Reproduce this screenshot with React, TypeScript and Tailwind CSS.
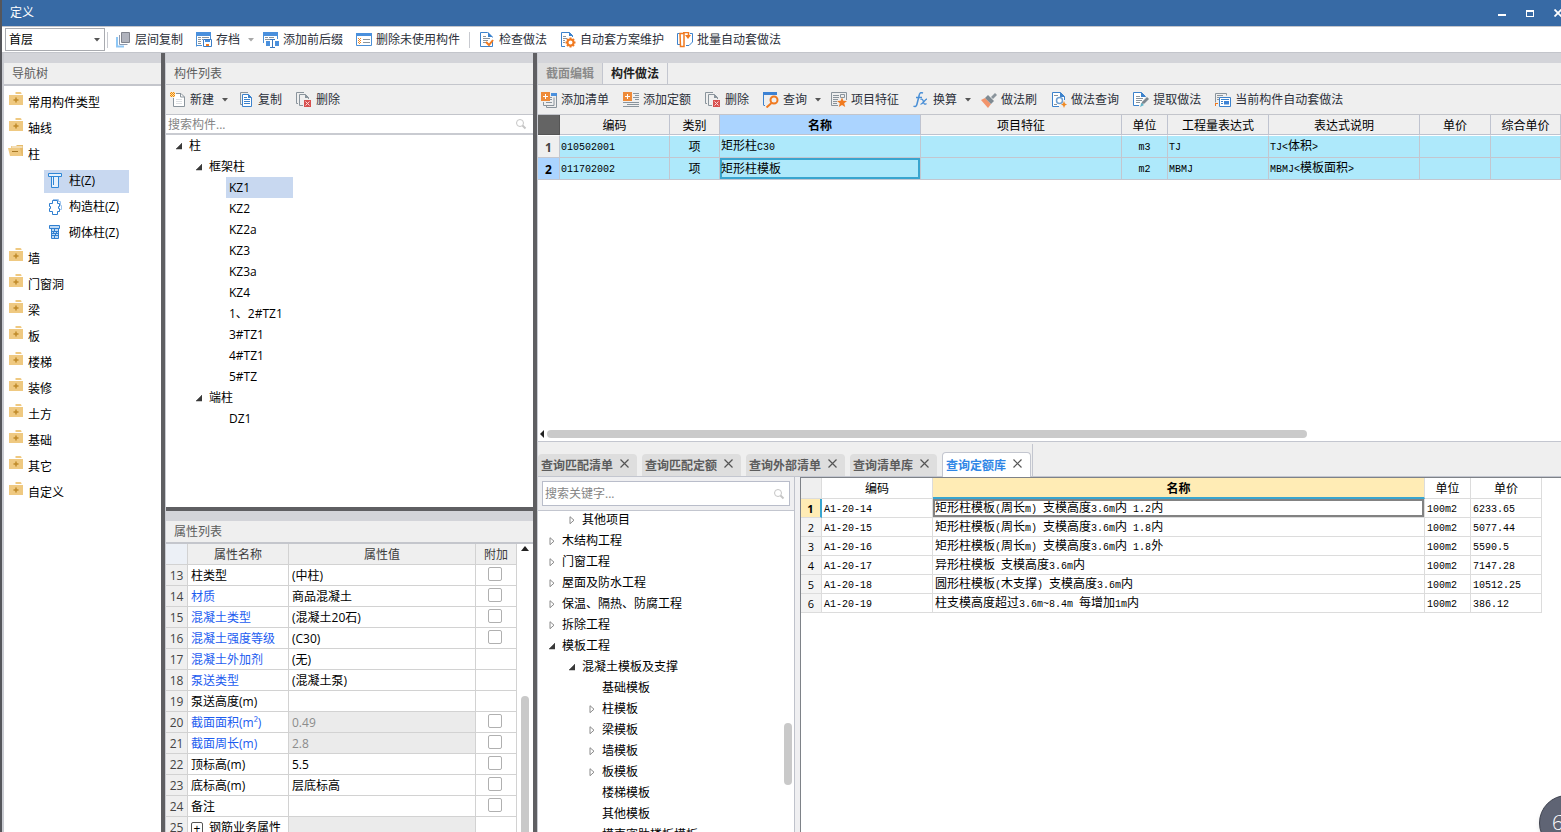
import type { ReactNode } from "react";

type IconProps = { children: ReactNode };

function Svg({ children }: IconProps) {
  return (
    <svg width="16" height="16" viewBox="0 0 16 16" fill="none" className="shrink-0" aria-hidden="true">
      {children}
    </svg>
  );
}

//Toolbar icons
const icons = {
  floorCopy: (
    <Svg>
      <path d="M6.500.5h8v10h-8z" fill="#b0b3bd" stroke="#80838c" />
      <path d="M4.500 3v9.500h8" stroke="#8f9bb0" />
      <path d="M2 5v9.500h7" stroke="#8fc7f5" strokeWidth="2" />
    </Svg>
  ),
  archive: (
    <Svg>
      <path d="M.5 14.500V.5h14v7" stroke="#4a8fd6" />
      <path d="M0 0h15v4H0z" fill="#4a90dd" />
      <path d="M.5 13.500H6" stroke="#4a8fd6" />
      <path d="M2 5.500h3M6 5.500h7M2 7.500h3M6 7.500h1M2 9.500h3M2 11.500h3" stroke="#8a949c" />
      <path d="M7.500 7.500h8v7h-8z" fill="#fff" stroke="#3c7cc4" />
      <path d="M9 8h5v2H9z" fill="#4a90dd" />
      <path d="M10 12h3v2h-3z" fill="#f07a20" />
    </Svg>
  ),
  affix: (
    <Svg>
      <path d="M.5 11V.5h14V7" stroke="#4a8fd6" />
      <path d="M0 0h15v4H0z" fill="#4a90dd" />
      <path d="M2 5.500h3M6 5.500h5M2 7.500h6" stroke="#8a949c" />
      <path d="M3 9h4v5H3zM12 9h4v5h-4z" fill="#4a90dd" />
      <path d="M7 7.500h5M9.500 7v8M7 15.500h5" stroke="#3a78c0" />
    </Svg>
  ),
  removeUnused: (
    <Svg>
      <path d="M.5 1.500h15v12H.5z" fill="#fff" stroke="#4a8fd6" />
      <path d="M0 1h16v3H0z" fill="#4a90dd" />
      <path d="M7 7.500h7M7 10.500h7" stroke="#8a949c" />
      <path d="M2 6h1v1H2zM4 6h1v1H4zM3 7h1v1H3zM2 8h1v1H2zM4 8h1v1H4zM3 9h1v1H3zM2 10h1v1H2zM4 10h1v1H4zM3 11h1v1H3z" fill="#f08a24" />
    </Svg>
  ),
  check: (
    <Svg>
      <path d="M13.500 8v6.500h-12V.5h7l5 5" stroke="#3c82cc" />
      <path d="M9 0v5h5z" fill="#3c82cc" />
      <path d="M4 4.500h3M4 6.500h7M4 8.500h5M4 10.500h3" stroke="#8a949c" />
      <path d="M7 10l3 3 4-5" stroke="#f07a20" strokeWidth="2" />
    </Svg>
  ),
  scheme: (
    <Svg>
      <path d="M5 14.500H1.500V.5h8l3 3V5" stroke="#3c82cc" />
      <path d="M9 0v4h4z" fill="#3c82cc" />
      <path d="M3 4.500h3M3 6.500h4M3 8.500h2M3 10.500h2" stroke="#8a949c" />
      <circle cx="10.500" cy="10.500" r="3" stroke="#f07a20" strokeWidth="2" />
      <path d="M10.500 5.500v2M10.500 13.500v2M5.500 10.500h2M13.500 10.500h2M7 7l1 1M13 13l1 1M14 7l-1 1M8 13l-1 1" stroke="#f07a20" strokeWidth="2" />
    </Svg>
  ),
  batch: (
    <Svg>
      <path d="M3 12.500H.5v-11H4M9 13.500h3l3.500-3.500V1.500H13" stroke="#3c82cc" />
      <path d="M3 1.500h4v13H3.500z" stroke="#f07a20" strokeWidth="1.500" />
      <path d="M6 .5h5.500v3" stroke="#f07a20" strokeWidth="1.500" />
      <path d="M8 3h6l-3 4z" fill="#f07a20" />
    </Svg>
  ),
  create: (
    <Svg>
      <path d="M6 1.500h5l3.500 3.500v9.500h-11V6" fill="#fff" stroke="#8a949c" />
      <path d="M10.500 1.500V5h4" stroke="#8a949c" />
      <path d="M6 7.500h6M6 9.500h6M6 11.500h6" stroke="#dde0e3" />
      <path d="M0 0h5v5H0z" fill="#fbdcae" />
      <path d="M1 0h1v1H1zM3 0h1v1H3zM0 1h1v1H0zM2 1h1v1H2zM4 1h1v1H4zM1 2h1v1H1zM3 2h1v1H3zM0 3h1v1H0zM2 3h1v1H2zM4 3h1v1H4zM1 4h1v1H1zM3 4h1v1H3z" fill="#f08a00" />
    </Svg>
  ),
  copy: (
    <Svg>
      <path d="M4 12.500H2.500v-12H10" stroke="#8a949c" />
      <path d="M4.500 2.500h6l3 3v9h-9z" fill="#fff" stroke="#3c82cc" />
      <path d="M10 2v4h4z" fill="#3c82cc" />
      <path d="M6 5.500h3M6 7.500h6M6 9.500h6M6 11.500h6" stroke="#3c82cc" />
    </Svg>
  ),
  remove: (
    <Svg>
      <path d="M2 11.500H.5V.5H8" stroke="#8a949c" />
      <path d="M7 13.500H3.500v-11h6l3 3V7" stroke="#8a949c" />
      <path d="M9 2v4h4z" fill="#8a949c" />
      <path d="M8 8h7v7H8z" fill="#d8504f" />
      <path d="M9.500 9.500l4 4M13.500 9.500l-4 4" stroke="#fbdada" />
    </Svg>
  ),
  addList: (
    <Svg>
      <path d="M10 1h6v3h-6z" fill="#4a90dd" />
      <path d="M15.500 4v11.500h-10V14M2.500 10v3.500h10.500v-8" stroke="#8a949c" />
      <path d="M9 5.500h2M9 7.500h2M5 10.500h6" stroke="#8a949c" />
      <path d="M0 0h9v9H0z" fill="#ee8b3a" />
      <path d="M4.500 2v5M2 4.500h5" stroke="#fff" />
    </Svg>
  ),
  addQuota: (
    <Svg>
      <path d="M10 1.500h6M12 3.500h4M10 5.500h6M12 7.500h4M0 10.500h16M4 12.500h12M0 14.500h16" stroke="#8a949c" />
      <path d="M0 0h9v9H0z" fill="#ee8b3a" />
      <path d="M4.500 2v5M2 4.500h5" stroke="#fff" />
    </Svg>
  ),
  query: (
    <Svg>
      <path d="M.5 13V1M2 13.500H.5" stroke="#3c82cc" />
      <path d="M0 0h14v3H0z" fill="#3c82d4" />
      <circle cx="11" cy="8" r="3.500" stroke="#f07a20" strokeWidth="2" />
      <path d="M8.500 11l-5 4.500" stroke="#f07a20" strokeWidth="2" />
    </Svg>
  ),
  feature: (
    <Svg>
      <path d="M7 13.500H.5V.5h15V8" stroke="#8a949c" />
      <path d="M2 3.500h6M2 5.500h6M2 7.500h5M2 9.500h4M2 11.500h4" stroke="#8a949c" />
      <path d="M9.500 2.500h4v3h-4z" stroke="#8a949c" />
      <path d="M11 5.500l1.300 3.200 3.700.2-2.800 2.300 1 3.800-3.200-2-3.200 2 1-3.800L6 8.900l3.700-.2z" fill="#f07a20" />
    </Svg>
  ),
  convert: (
    <Svg>
      <path d="M10 1C7.500 0 6.500 1 6 4L4 12c-.5 2.500-2 3-3.500 2M3 5.500h6" stroke="#4a8fd6" strokeWidth="1.500" />
      <path d="M7.500 7.500c2-1 2.500.5 3 2.500s1 3 3 1.500M14 7c-2 0-4.500 6-6.500 5" stroke="#4a8fd6" strokeWidth="1.300" />
    </Svg>
  ),
  brush: (
    <Svg>
      <path d="M0 8l4-2 6 6-3 4z" fill="#f2946b" />
      <path d="M4 6l3-3 6 6-3 3z" fill="#7f8a92" />
      <path d="M10 5l4-4 2 2-4 4z" fill="#8a949c" />
    </Svg>
  ),
  methodQuery: (
    <Svg>
      <path d="M8 14.500H1.500V.5h8l4 4V8" fill="#fff" stroke="#3c82cc" />
      <path d="M9 0v5h5z" fill="#3c82cc" />
      <circle cx="8.500" cy="8.500" r="3" stroke="#6f9fd0" strokeWidth="1.500" />
      <path d="M3 3.500h4M3 12.500h3" stroke="#8a949c" />
      <path d="M13 9l1 2.500 2 1-2 1-1 2.500-1-2.500-2-1 2-1z" fill="#f08a24" />
    </Svg>
  ),
  extract: (
    <Svg>
      <path d="M6 13.500H.5V.5h8l4 4" fill="#fff" stroke="#3c82cc" />
      <path d="M8 0v5h5z" fill="#3c82cc" />
      <path d="M3 4.500h4M3 6.500h7M3 8.500h6M3 10.500h4" stroke="#8a949c" />
      <path d="M8 12l1.500-2.500L14 5l2 2-4.500 4.500z" fill="#7c8790" />
      <path d="M7 15l1.500-4 2.500 2z" fill="#5bb3c8" />
    </Svg>
  ),
  autoApply: (
    <Svg>
      <path d="M.5 10.500v-9h11v2M2 3.500h6M2 5.500h2M2 7.500h2" stroke="#8a949c" />
      <path d="M0 11h3v1H1v2H0z" fill="#f07a20" />
      <path d="M4.500 5.500h11v9h-11z" fill="#fff" stroke="#3c82cc" />
      <path d="M6 7.500h8M6 9.500h2M6 11.500h2" stroke="#3c82cc" />
      <path d="M9 9h5v3.500H9z" fill="#3c82d4" />
    </Svg>
  ),
};

type IconName = keyof typeof icons;

function Caret({ light = false }: { light?: boolean }) {
  return (
    <svg width="6" height="4" viewBox="0 0 6 4" className="ml-1 -mr-1 shrink-0" aria-hidden="true">
      <path d="M0 0h6L3 3.500z" fill={light ? "#a8a8a8" : "#555"} />
    </svg>
  );
}

function ToolButton({ icon, label, caret }: { icon: IconName; label: string; caret?: "dark" | "light" }) {
  return (
    <button type="button" className="flex shrink-0 items-center gap-1 whitespace-nowrap leading-4 text-[#2b2f3a]">
      {icons[icon]}
      <span>{label}</span>
      {caret && <Caret light={caret === "light"} />}
    </button>
  );
}

function PanelTitle({ title }: { title: string }) {
  return (
    <>
      <div className="h-[10px] shrink-0 bg-[#d3d4d9]" />
      <h2 className="flex h-[22px] shrink-0 items-center border-b border-[#c4c6cc] bg-[#efefef] px-2 text-[#5c5c5c]">{title}</h2>
    </>
  );
}

function SearchIcon() {
  return (
    <svg width="12" height="12" viewBox="0 0 12 12" fill="none" className="shrink-0" aria-hidden="true">
      <circle cx="5" cy="5" r="3.500" stroke="#c6c6c6" />
      <path d="M7.500 7.500l3 3" stroke="#c6c6c6" strokeWidth="2" />
    </svg>
  );
}

//Navigation tree
const navTop = ["常用构件类型", "轴线"];
const navBottom = ["墙", "门窗洞", "梁", "板", "楼梯", "装修", "土方", "基础", "其它", "自定义"];

function Folder({ open = false }: { open?: boolean }) {
  return (
    <svg width="16" height="14" viewBox="0 0 16 14" className="mb-2 shrink-0" aria-hidden="true">
      {open ? (
        <>
          <path d="M3 2h5l1-1h6v11H3z" fill="#e6bb6a" />
          <path d="M3.500 3h11" stroke="#fff" />
          <path d="M0 4h12l2 8H2z" fill="#efc981" />
          <path d="M4 7.500h6" stroke="#a87a26" />
        </>
      ) : (
        <>
          <path d="M7.500 0h5l1 1v1h-6z" fill="#efc981" />
          <path d="M1 3h14v10H1z" fill="#efc981" />
          <path d="M8 5.500v5M5.500 8h5" stroke="#c08a2a" strokeWidth="1.500" />
        </>
      )}
    </svg>
  );
}

function NavRow({ label, open }: { label: string; open?: boolean }) {
  return (
    <li className="flex h-[26px] items-center gap-1 pl-1">
      <Folder open={open} />
      <button type="button">{label}</button>
    </li>
  );
}

const navChildren = [
  {
    label: "柱(Z)",
    active: true,
    icon: (
      <Svg>
        <path d="M1.500.5h13v3h-13zM4.500 3.500h7v11h-7zM6.500 4v8" stroke="#2f86d6" fill="#e6f1fc" />
      </Svg>
    ),
  },
  {
    label: "构造柱(Z)",
    active: false,
    icon: (
      <Svg>
        <path d="M6 .5h5.500v2h2v4h1v4h-2v2" stroke="#9cc3ec" />
        <path d="M5.500 1.500h5v3h2v3h-1v2h1v3h-2v3h-5v-3h-3v-3h1v-2h-1v-3h3z" stroke="#2f7fd0" fill="#fff" />
      </Svg>
    ),
  },
  {
    label: "砌体柱(Z)",
    active: false,
    icon: (
      <Svg>
        <path d="M2.500.5h10v3h-10zM4.500 3.500h7v10h-7z" stroke="#2f7fd0" fill="#bfdaf5" />
        <path d="M4 6.500h7M4 8.500h7M4 10.500h7M7.500 4v2M6.500 7v2M9.500 7v2M8.500 9v2M7.500 11v2" stroke="#2f7fd0" />
      </Svg>
    ),
  },
];

//Indented trees
type Node = { label: string; depth: number; state?: "open" | "closed"; selected?: boolean };

const components: Node[] = [
  { label: "柱", depth: 0, state: "open" },
  { label: "框架柱", depth: 1, state: "open" },
  { label: "KZ1", depth: 2, selected: true },
  { label: "KZ2", depth: 2 },
  { label: "KZ2a", depth: 2 },
  { label: "KZ3", depth: 2 },
  { label: "KZ3a", depth: 2 },
  { label: "KZ4", depth: 2 },
  { label: "1、2#TZ1", depth: 2 },
  { label: "3#TZ1", depth: 2 },
  { label: "4#TZ1", depth: 2 },
  { label: "5#TZ", depth: 2 },
  { label: "端柱", depth: 1, state: "open" },
  { label: "DZ1", depth: 2 },
];

const quotaTree: Node[] = [
  { label: "其他项目", depth: 1, state: "closed" },
  { label: "木结构工程", depth: 0, state: "closed" },
  { label: "门窗工程", depth: 0, state: "closed" },
  { label: "屋面及防水工程", depth: 0, state: "closed" },
  { label: "保温、隔热、防腐工程", depth: 0, state: "closed" },
  { label: "拆除工程", depth: 0, state: "closed" },
  { label: "模板工程", depth: 0, state: "open" },
  { label: "混凝土模板及支撑", depth: 1, state: "open" },
  { label: "基础模板", depth: 2 },
  { label: "柱模板", depth: 2, state: "closed" },
  { label: "梁模板", depth: 2, state: "closed" },
  { label: "墙模板", depth: 2, state: "closed" },
  { label: "板模板", depth: 2, state: "closed" },
  { label: "楼梯模板", depth: 2 },
  { label: "其他模板", depth: 2 },
  { label: "模壳密肋楼板模板", depth: 2 },
];

const indent = ["pl-[10px]", "pl-[30px]", "pl-[50px]"];

function Tree({ nodes }: { nodes: Node[] }) {
  return (
    <ul>
      {nodes.map(node => (
        <li key={node.label} className={`flex h-[21px] items-center gap-1 ${indent[node.depth]}`}>
          <svg width="6" height="8" viewBox="0 0 6 8" className="shrink-0" aria-hidden="true">
            {node.state === "open" && <path d="M6 1v6H0z" fill="#3a3a3a" stroke="#3a3a3a" strokeWidth=".5" />}
            {node.state === "closed" && <path d="M1 .7l4 3.500-4 3.500z" fill="#fff" stroke="#8a8a8a" />}
          </svg>
          <button
            type="button"
            className={`h-[21px] whitespace-nowrap px-[3px] text-left ${node.selected ? "w-[67px] bg-[#c8d8f0]" : ""}`}
          >
            {node.label}
          </button>
        </li>
      ))}
    </ul>
  );
}

//Property grid
const properties = [
  { no: 13, name: "柱类型", value: "(中柱)", extra: true },
  { no: 14, name: "材质", value: "商品混凝土", extra: true, blue: true },
  { no: 15, name: "混凝土类型", value: "(混凝土20石)", extra: true, blue: true },
  { no: 16, name: "混凝土强度等级", value: "(C30)", extra: true, blue: true },
  { no: 17, name: "混凝土外加剂", value: "(无)", blue: true },
  { no: 18, name: "泵送类型", value: "(混凝土泵)", blue: true },
  { no: 19, name: "泵送高度(m)", value: "" },
  { no: 20, name: "截面面积(m²)", value: "0.49", extra: true, blue: true, locked: true },
  { no: 21, name: "截面周长(m)", value: "2.8", extra: true, blue: true, locked: true },
  { no: 22, name: "顶标高(m)", value: "5.5", extra: true },
  { no: 23, name: "底标高(m)", value: "层底标高", extra: true },
  { no: 24, name: "备注", value: "", extra: true },
  { no: 25, name: "钢筋业务属性", value: "", locked: true, group: true },
];

function PropertyTable() {
  return (
    <table className="w-full table-fixed border-separate border-spacing-0">
      <colgroup>
        <col className="w-[22px]" />
        <col className="w-[101px]" />
        <col />
        <col className="w-[41px]" />
      </colgroup>
      <thead>
        <tr className="h-[21px] bg-[#efefef] text-[#3c3c3c]">
          <th className="border-r border-b border-[#d2d2d2] bg-[#ecf0f6]" />
          <th className="border-r border-b border-[#d2d2d2] pt-0.5 font-normal">属性名称</th>
          <th className="border-r border-b border-[#d2d2d2] pt-0.5 font-normal">属性值</th>
          <th className="border-r border-b border-[#d2d2d2] pt-0.5 font-normal">附加</th>
        </tr>
      </thead>
      <tbody>
        {properties.map(row => (
          <tr key={row.no} className="h-[21px]">
            <td className="border-r border-b border-[#d2d2d2] bg-[#efefef] pt-0.5 text-center text-[#444]">{row.no}</td>
            <td className={`border-r border-b border-[#d2d2d2] pt-0.5 pl-[3px] whitespace-nowrap ${row.blue ? "text-[#1c5cf0]" : ""}`}>
              {row.group ? (
                <span className="flex items-center gap-1.5">
                  <button type="button" aria-label="展开" className="h-3 w-3 rounded-[2px] border border-[#555] text-xs leading-[9px]">
                    +
                  </button>
                  {row.name}
                </span>
              ) : (
                row.name
              )}
            </td>
            <td className={`border-r border-b border-[#d2d2d2] pt-0.5 pl-[3px] ${row.locked ? "bg-[#ebebeb] text-[#8c8c8c]" : ""}`}>{row.value}</td>
            <td className="border-r border-b border-[#d2d2d2] pr-0.5">
              {row.extra && (
                <input
                  type="checkbox"
                  aria-label={`附加 ${row.name}`}
                  className="mx-auto mb-0.5 block h-[14px] w-[14px] appearance-none rounded-[2px] border border-[#b0b0b0] bg-white"
                />
              )}
            </td>
          </tr>
        ))}
      </tbody>
    </table>
  );
}

//Grid text keeps latin characters at half the width of a Chinese one
function GridText({ text }: { text: string }) {
  return (
    <>
      {text.split(/([\x20-\x7e]+)/).map((part, i) =>
        i % 2 ? (
          <span key={i} className="text-[10px] whitespace-pre">
            {part}
          </span>
        ) : (
          part
        )
      )}
    </>
  );
}

const methodHeads = ["编码", "类别", "名称", "项目特征", "单位", "工程量表达式", "表达式说明", "单价", "综合单价"];
const methodRows = [
  ["010502001", "项", "矩形柱C30", "", "m3", "TJ", "TJ<体积>", "", ""],
  ["011702002", "项", "矩形柱模板", "", "m2", "MBMJ", "MBMJ<模板面积>", "", ""],
];

function MethodTable() {
  return (
    <table className="w-full table-fixed border-separate border-spacing-0">
      <colgroup>
        <col className="w-[22px]" />
        <col className="w-[110px]" />
        <col className="w-[50px]" />
        <col className="w-[201px]" />
        <col className="w-[201px]" />
        <col className="w-[46px]" />
        <col className="w-[101px]" />
        <col className="w-[151px]" />
        <col className="w-[71px]" />
        <col />
      </colgroup>
      <thead>
        <tr className="h-5 bg-[#efefef]">
          <th className="border-r border-b border-[#555] bg-[#646464]" />
          {methodHeads.map(head => (
            <th
              key={head}
              className={`border-r border-b border-[#bfc3cf] pt-0.5 ${head === "名称" ? "bg-[#abd4ff] font-bold" : "font-normal"}`}
            >
              {head}
            </th>
          ))}
        </tr>
      </thead>
      <tbody className="font-['Liberation_Mono','Noto_Sans_CJK_SC',monospace]">
        {methodRows.map((row, r) => (
          <tr key={row[0]} className={r === 0 ? "h-[23px]" : "h-[22px]"}>
            <th
              className={`border-r border-b border-[#c3c6cf] pt-0.5 font-['Open_Sans',sans-serif] font-bold ${r === 0 ? "border-t border-t-white bg-[#efefef] text-[#444]" : "bg-[#abd4ff]"}`}
            >
              {r + 1}
            </th>
            {row.map((cell, c) => (
              <td
                key={c}
                className={`border-r border-b border-[#c3c6cf] bg-[#aee9fb] px-px pt-0.5 whitespace-nowrap ${r === 0 ? "border-t border-t-white" : ""} ${c === 1 || c === 4 ? "text-center" : ""} ${r === 1 && c === 2 ? "shadow-[inset_0_0_0_2px_#39a5cf]" : ""}`}
              >
                <GridText text={cell} />
              </td>
            ))}
          </tr>
        ))}
      </tbody>
    </table>
  );
}

const quotaRows = [
  ["A1-20-14", "矩形柱模板(周长m) 支模高度3.6m内 1.2内", "100m2", "6233.65"],
  ["A1-20-15", "矩形柱模板(周长m) 支模高度3.6m内 1.8内", "100m2", "5077.44"],
  ["A1-20-16", "矩形柱模板(周长m) 支模高度3.6m内 1.8外", "100m2", "5590.5"],
  ["A1-20-17", "异形柱模板 支模高度3.6m内", "100m2", "7147.28"],
  ["A1-20-18", "圆形柱模板(木支撑) 支模高度3.6m内", "100m2", "10512.25"],
  ["A1-20-19", "柱支模高度超过3.6m~8.4m 每增加1m内", "100m2", "386.12"],
];

function QuotaTable() {
  return (
    <table className="w-[741px] table-fixed border-separate border-spacing-0">
      <colgroup>
        <col className="w-[21px]" />
        <col className="w-[111px]" />
        <col className="w-[492px]" />
        <col className="w-[46px]" />
        <col className="w-[71px]" />
      </colgroup>
      <thead>
        <tr className="h-[21px]">
          <th className="border-r border-b border-[#dcdcdc] bg-[#efefef]" />
          <th className="border-r border-b border-[#dcdcdc] pt-0.5 font-normal">编码</th>
          <th className="border-r border-b-2 border-[#dcdcdc] border-b-[#39a5cf] bg-[#ffecb5] pt-0.5 font-bold">名称</th>
          <th className="border-r border-b border-[#dcdcdc] pt-0.5 font-normal">单位</th>
          <th className="border-r border-b border-[#dcdcdc] pt-0.5 font-normal">单价</th>
        </tr>
      </thead>
      <tbody className="font-['Liberation_Mono','Noto_Sans_CJK_SC',monospace] leading-[14px]">
        {quotaRows.map((row, r) => (
          <tr key={row[0]} className="h-[19px]">
            <th
              className={`border-b border-[#dcdcdc] pt-0.5 font-['Open_Sans',sans-serif] text-[11px] leading-[14px] ${r === 0 ? "border-r-2 border-r-[#39a5cf] bg-[#ffecb5] font-bold" : "border-r bg-[#f3f3f3] font-normal"}`}
            >
              {r + 1}
            </th>
            {row.map((cell, c) => (
              <td
                key={c}
                className={`border-r border-b border-[#dcdcdc] px-0.5 pt-0.5 whitespace-nowrap ${r === 0 && c === 1 ? "shadow-[inset_0_0_0_2px_#828282]" : ""}`}
              >
                <GridText text={cell} />
              </td>
            ))}
          </tr>
        ))}
      </tbody>
    </table>
  );
}

const queryTabs = ["查询匹配清单", "查询匹配定额", "查询外部清单", "查询清单库", "查询定额库"];

function QueryTabs() {
  return (
    <div className="flex h-[35px] shrink-0 items-end border-b border-[#c3c6cf] bg-[#efefef]">
      <div className="-mb-px flex items-end gap-[5px] border-r border-[#c3c6cf] pt-2 pr-px">
        {queryTabs.map(tab => {
          const active = tab === "查询定额库";
          return (
            <div
              key={tab}
              className={`flex items-center gap-[7px] rounded-t-sm pr-2 pl-[3px] font-bold ${active ? "h-[25px] border border-b-0 border-[#c3c6cf] bg-white text-[#2f86e6]" : "mb-px h-[22px] bg-[#dedede] text-[#5c5c5c]"}`}
            >
              <button type="button" className="pt-px">
                {tab}
              </button>
              <button type="button" aria-label={`关闭 ${tab}`} className="mb-1">
                <svg width="9" height="9" viewBox="0 0 9 9" aria-hidden="true">
                  <path d="M.5.5l8 8M8.500.5l-8 8" stroke="#555" strokeWidth="1.200" />
                </svg>
              </button>
            </div>
          );
        })}
      </div>
    </div>
  );
}

export default function App() {
  return (
    <div className="flex h-screen w-full overflow-hidden bg-white font-['Open_Sans','Noto_Sans_CJK_SC',sans-serif] text-xs leading-4 text-black">
      <div className="w-0.5 shrink-0 bg-[#55565b]" />
      <div className="relative flex min-w-0 flex-1 flex-col">
        {/* Title bar */}
        <header className="flex h-[26px] shrink-0 items-center justify-between bg-[#376aa5] pl-2 text-white">
          <h1>定义</h1>
          <div className="flex items-center gap-5">
            <button type="button" aria-label="最小化" className="mt-1 h-0.5 w-2 bg-white" />
            <button type="button" aria-label="最大化" className="h-[7px] w-2 border border-t-2 border-white" />
            <button type="button" aria-label="关闭">
              <svg width="7" height="8" viewBox="0 0 7 8" aria-hidden="true">
                <path d="M.5.5l7 7M7.500.5l-7 7" stroke="#fff" strokeWidth="1.800" />
              </svg>
            </button>
          </div>
        </header>

        {/* Main toolbar */}
        <div className="flex h-[27px] shrink-0 items-center gap-[11px] border-t border-b border-[#c3c5cb] pl-[3px]">
          <div className="flex items-center gap-0.5">
            <label className="flex h-[23px] w-[100px] items-center border border-[#a9abb0] bg-white pr-1">
              <select aria-label="楼层" className="h-full min-w-0 flex-1 appearance-none pl-[3px] outline-none">
                <option>首层</option>
              </select>
              <svg width="6" height="4" viewBox="0 0 6 4" className="pointer-events-none" aria-hidden="true">
                <path d="M0 0h6L3 3.500z" fill="#555" />
              </svg>
            </label>
            <div className="h-4 w-px bg-[#c8cad0]" />
          </div>
          <div className="-ml-1 flex items-center gap-[13px]">
            <ToolButton icon="floorCopy" label="层间复制" />
            <ToolButton icon="archive" label="存档" caret="light" />
            <ToolButton icon="affix" label="添加前后缀" />
            <ToolButton icon="removeUnused" label="删除未使用构件" />
            <div className="-mx-1 h-4 w-px bg-[#c8cad0]" />
            <ToolButton icon="check" label="检查做法" />
            <ToolButton icon="scheme" label="自动套方案维护" />
            <ToolButton icon="batch" label="批量自动套做法" />
          </div>
        </div>

        <div className="flex min-h-0 flex-1">
          {/* Navigation */}
          <nav className="flex w-[159px] shrink-0 flex-col overflow-hidden border-l-2 border-[#c9cbd1]">
            <PanelTitle title="导航树" />
            <ul className="border-t border-[#c4c6cc] pt-1">
              {navTop.map(label => (
                <NavRow key={label} label={label} />
              ))}
              <NavRow label="柱" open />
              {navChildren.map(item => (
                <li key={item.label} className="flex h-[26px] items-center pl-10">
                  <button type="button" className={`flex h-[23px] w-[85px] items-center gap-1.5 pl-[3px] ${item.active ? "bg-[#c8d8f0]" : ""}`}>
                    {item.icon}
                    <span className="whitespace-nowrap">{item.label}</span>
                  </button>
                </li>
              ))}
              {navBottom.map(label => (
                <NavRow key={label} label={label} />
              ))}
            </ul>
          </nav>

          <div className="w-1 shrink-0 bg-[#5f5f62]" />

          {/* Components and properties */}
          <div className="flex w-[368px] shrink-0 flex-col border-l border-[#c9cbd1]">
            <section className="flex min-h-0 flex-1 flex-col">
              <PanelTitle title="构件列表" />
              <div className="flex h-[30px] shrink-0 items-center gap-[14px] border-b border-[#c3c5cb] bg-[#efefef] pl-1">
                <ToolButton icon="create" label="新建" caret="dark" />
                <ToolButton icon="copy" label="复制" />
                <ToolButton icon="remove" label="删除" />
              </div>
              <label className="flex h-5 shrink-0 items-center border-b-2 border-[#c9cbd1] pr-1.5 pl-0.5">
                <input aria-label="搜索构件" placeholder="搜索构件..." className="min-w-0 flex-1 pt-px outline-none placeholder:text-[#858585]" />
                <SearchIcon />
              </label>
              <div className="min-h-0 flex-1 overflow-hidden">
                <Tree nodes={components} />
              </div>
            </section>
            <div className="h-1 shrink-0 bg-[#5f5f62]" />
            <section className="flex h-[321px] shrink-0 flex-col overflow-hidden">
              <PanelTitle title="属性列表" />
              <div className="flex min-h-0 flex-1 border-t border-[#c4c6cc]">
                <div className="min-w-0 flex-1">
                  <PropertyTable />
                </div>
                <div className="flex w-4 flex-col items-center justify-between pt-0.5">
                  <svg width="8" height="5" viewBox="0 0 8 5" aria-hidden="true">
                    <path d="M0 5h8L4 0z" fill="#222" />
                  </svg>
                  <div className="h-[136px] w-2 rounded-t-full bg-[#c9c9c9]" />
                </div>
              </div>
            </section>
          </div>

          <div className="w-1 shrink-0 bg-[#5f5f62]" />

          {/* Methods */}
          <div className="flex min-w-0 flex-1 flex-col border-l border-[#c9cbd1]">
            <div className="h-[10px] shrink-0 bg-[#d3d4d9]" />
            <div className="flex h-[22px] shrink-0 border-b border-[#c3c5cb] bg-[#efefef] font-bold">
              <button type="button" className="w-[65px] border-r border-[#c3c6cf] bg-[#e0e0e0] pt-px text-[#8a8a8a]">
                截面编辑
              </button>
              <button type="button" className="w-[65px] border-r border-[#c3c6cf] pt-px text-[#222]">
                构件做法
              </button>
            </div>
            <div className="flex h-[30px] shrink-0 items-center gap-[14px] overflow-hidden border-b border-[#c3c5cb] bg-[#efefef] pl-[3px]">
              <ToolButton icon="addList" label="添加清单" />
              <ToolButton icon="addQuota" label="添加定额" />
              <ToolButton icon="remove" label="删除" />
              <ToolButton icon="query" label="查询" caret="dark" />
              <ToolButton icon="feature" label="项目特征" />
              <ToolButton icon="convert" label="换算" caret="dark" />
              <ToolButton icon="brush" label="做法刷" />
              <ToolButton icon="methodQuery" label="做法查询" />
              <ToolButton icon="extract" label="提取做法" />
              <ToolButton icon="autoApply" label="当前构件自动套做法" />
            </div>
            <div className="min-h-0 flex-1 overflow-hidden">
              <MethodTable />
            </div>
            <div className="flex h-4 shrink-0 items-center gap-[3px] border-b border-[#c3c6cf] pr-2 pl-0.5">
              <svg width="4" height="8" viewBox="0 0 4 8" aria-hidden="true">
                <path d="M4 0v8L0 4z" fill="#222" />
              </svg>
              <div className="h-2 w-3/4 rounded-full bg-[#cacaca]" />
            </div>

            {/* Quota query */}
            <section className="flex h-[390px] shrink-0 flex-col">
              <QueryTabs />
              <div className="flex min-h-0 flex-1 bg-[#efeff1]">
                <div className="flex w-[257px] shrink-0 flex-col overflow-hidden border-r border-[#bfc2cb]">
                  <div className="shrink-0 border-b border-[#c3c6cf] px-1 pt-1 pb-1">
                    <label className="flex h-[25px] items-center border border-[#b9bdca] bg-white pr-1 pl-0.5">
                      <input aria-label="搜索关键字" placeholder="搜索关键字..." className="min-w-0 flex-1 pt-px outline-none placeholder:text-[#858585]" />
                      <SearchIcon />
                    </label>
                  </div>
                  <div className="flex min-h-0 flex-1 bg-white pl-px">
                    <div className="-mt-0.5 min-w-0 flex-1">
                      <Tree nodes={quotaTree} />
                    </div>
                    <div className="flex w-[10px] flex-col justify-end pb-[47px]">
                      <div className="h-[62px] w-2 rounded-full bg-[#c9c9c9]" />
                    </div>
                  </div>
                </div>
                <div className="ml-[5px] min-w-0 flex-1 overflow-hidden border-t border-l border-[#7e8288] bg-white">
                  <QuotaTable />
                </div>
              </div>
            </section>
          </div>
        </div>

        <button
          type="button"
          className="absolute -right-[34px] -bottom-[19px] flex h-14 w-14 items-center rounded-full border border-[#3f434f] bg-[#5f6474] pl-3 text-xl font-light text-white shadow-md"
        >
          6
        </button>
      </div>
    </div>
  );
}
